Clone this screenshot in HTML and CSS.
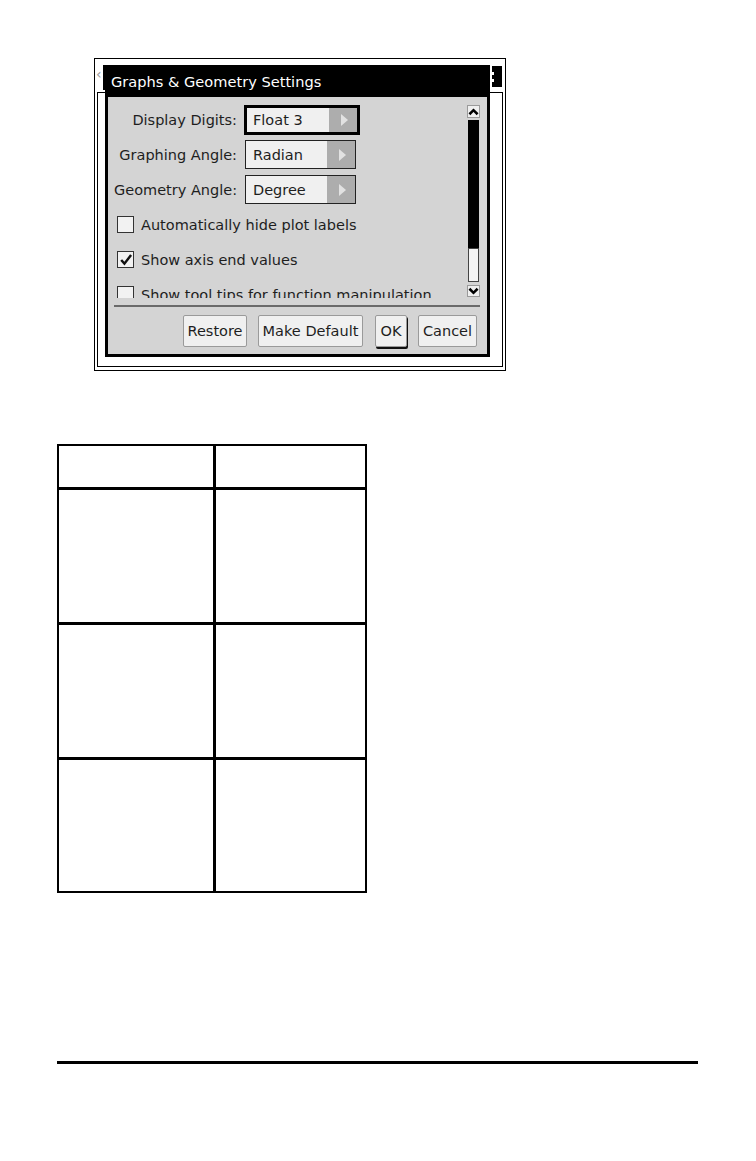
FILE: index.html
```html
<!DOCTYPE html>
<html>
<head>
<meta charset="utf-8">
<link rel="stylesheet" href="styles.css">
</head>
<body>
<div class="page">
  <div class="frame">
    <span class="bg-back">&lsaquo;</span>
    <div class="bg-bar"></div>
    <div class="bg-battery"><span class="notch n1"></span><span class="notch n2"></span></div>
    <div class="bg-win"></div>

    <div class="dialog">
      <div class="dlg-title">Graphs &amp; Geometry Settings</div>
      <div class="dlg-body">
        <div class="content">
          <div class="settings">
            <div class="row">
              <span class="label">Display Digits:</span>
              <div class="dd focused"><span class="dd-val">Float 3</span><span class="dd-btn"><span class="tri"></span></span></div>
            </div>
            <div class="row">
              <span class="label">Graphing Angle:</span>
              <div class="dd"><span class="dd-val">Radian</span><span class="dd-btn"><span class="tri"></span></span></div>
            </div>
            <div class="row">
              <span class="label">Geometry Angle:</span>
              <div class="dd"><span class="dd-val">Degree</span><span class="dd-btn"><span class="tri"></span></span></div>
            </div>
            <div class="row check-row">
              <span class="cb"></span><span class="cb-text">Automatically hide plot labels</span>
            </div>
            <div class="row check-row">
              <span class="cb"><svg class="tick" viewBox="0 0 16 16" width="14" height="14"><path d="M2.5 8 L6.2 12.2 L13.8 2.2" fill="none" stroke="#111" stroke-width="2.8"/></svg></span><span class="cb-text">Show axis end values</span>
            </div>
            <div class="row check-row">
              <span class="cb"></span><span class="cb-text">Show tool tips for function manipulation</span>
            </div>
          </div>
          <div class="scrollbar">
            <div class="sb-arrow"><svg viewBox="0 0 12 11" width="11" height="10"><path d="M1.5 8 L6 3.5 L10.5 8" fill="none" stroke="#000" stroke-width="2.8"/></svg></div>
            <div class="sb-track"></div>
            <div class="sb-thumb"></div>
            <div class="sb-arrow down"><svg viewBox="0 0 12 11" width="11" height="10"><path d="M1.5 3 L6 7.5 L10.5 3" fill="none" stroke="#000" stroke-width="2.8"/></svg></div>
          </div>
        </div>
        <div class="separator"></div>
        <div class="buttons">
          <span class="btn b-restore">Restore</span>
          <span class="btn b-default">Make Default</span>
          <span class="btn b-ok">OK</span>
          <span class="btn b-cancel">Cancel</span>
        </div>
      </div>
    </div>
  </div>

  <div class="grid-table">
    <div class="cell"></div><div class="cell"></div>
    <div class="cell"></div><div class="cell"></div>
    <div class="cell"></div><div class="cell"></div>
    <div class="cell"></div><div class="cell"></div>
  </div>

  <div class="rule"></div>
</div>
</body>
</html>
```
FILE: styles.css
```css
html, body {
  margin: 0;
  padding: 0;
  background: #fff;
}
.page {
  width: 756px;
  height: 1161px;
  padding-top: 58px;
  box-sizing: border-box;
  font-family: "DejaVu Sans", sans-serif;
  color: #1e1e1e;
}

/* screenshot frame */
.frame {
  position: relative;
  margin-left: 94px;
  width: 412px;
  height: 313px;
  box-sizing: border-box;
  border: 1px solid #000;
  background: #fff;
}
.bg-back {
  position: absolute;
  left: 1px;
  top: 5px;
  font-size: 14px;
  color: #999;
  line-height: 20px;
}
.bg-bar {
  position: absolute;
  left: 8px;
  top: 6px;
  width: 387px;
  height: 25px;
  background: #000;
}
.bg-battery {
  position: absolute;
  left: 397px;
  top: 7px;
  width: 10px;
  height: 21px;
  background: #000;
}
.notch {
  position: absolute;
  background: #fff;
  width: 2px;
  height: 3px;
}
.n1 { left: 0; top: 6px; }
.n2 { left: 0; top: 13px; }
.bg-win {
  position: absolute;
  left: 2px;
  top: 33px;
  width: 406px;
  height: 275px;
  box-sizing: border-box;
  border: 1px solid #000;
}

/* dialog */
.dialog {
  position: absolute;
  left: 10px;
  top: 8px;
  width: 385px;
  height: 290px;
  display: flex;
  flex-direction: column;
}
.dlg-title {
  height: 30px;
  background: #000;
  color: #fff;
  font-size: 14.6px;
  line-height: 30px;
  padding-left: 6px;
  white-space: nowrap;
}
.dlg-body {
  flex: 1;
  background: #d4d4d4;
  border: 3px solid #000;
  border-top: none;
  padding: 3px 7px 7px 6px;
  display: flex;
  flex-direction: column;
}
.content {
  display: flex;
  height: 198px;
}
.settings {
  flex: 1;
  overflow: hidden;
  padding-top: 2px;
}
.row {
  height: 35px;
  display: flex;
  align-items: center;
  font-size: 14.5px;
  white-space: nowrap;
}
.label {
  width: 123px;
  text-align: right;
  margin-right: 7px;
  flex: none;
}
.dd {
  display: flex;
  box-sizing: border-box;
  width: 111px;
  height: 29px;
  border: 1px solid #222;
  margin-left: 1px;
}
.dd.focused {
  width: 116px;
  height: 30px;
  border: 3px solid #000;
  margin-left: 0;
}
.dd-val {
  flex: 1;
  background: #f0f0f0;
  padding-left: 7px;
  line-height: 28px;
}
.dd.focused .dd-val {
  padding-left: 6px;
  line-height: 25px;
}
.dd-btn {
  width: 28px;
  background: #adadad;
  display: flex;
  align-items: center;
  padding-left: 12px;
  box-sizing: border-box;
}
.tri {
  width: 0;
  height: 0;
  border-top: 6px solid transparent;
  border-bottom: 6px solid transparent;
  border-left: 7px solid #e2e2e2;
}
.check-row {
  padding-left: 3px;
}
.cb {
  width: 17px;
  height: 17px;
  box-sizing: border-box;
  border: 1px solid #333;
  background: #f2f2f2;
  margin-right: 7px;
  flex: none;
  display: flex;
  align-items: center;
  justify-content: center;
}

/* scrollbar */
.scrollbar {
  width: 13px;
  margin-left: 2px;
  padding-top: 5px;
  display: flex;
  flex-direction: column;
  align-items: center;
}
.sb-arrow {
  width: 13px;
  height: 13px;
  box-sizing: border-box;
  border: 1px solid #9a9a9a;
  background: #efefef;
  display: flex;
  align-items: center;
  justify-content: center;
}
.sb-arrow.down {
  margin-top: 3px;
  height: 12px;
}
.sb-track {
  margin-top: 2px;
  width: 11px;
  height: 128px;
  background: #000;
}
.sb-thumb {
  width: 11px;
  height: 34px;
  box-sizing: border-box;
  border: 1px solid #444;
  background: #f4f4f4;
}

.separator {
  margin-top: 7px;
  height: 2px;
  background: #6a6a6a;
}
.buttons {
  margin-top: 8px;
  display: flex;
  justify-content: flex-end;
  gap: 11px;
  padding-right: 3px;
}
.btn {
  height: 32px;
  box-sizing: border-box;
  border: 1px solid #9a9a9a;
  border-radius: 2px;
  background: #f0f0f0;
  font-size: 14.5px;
  line-height: 30px;
  text-align: center;
  white-space: nowrap;
  overflow: hidden;
}
.b-restore { width: 64px; }
.b-default { width: 105px; }
.b-ok { width: 32px; margin-left: 1px; box-shadow: 1px 2px 0 #111; }
.b-cancel { width: 59px; }

/* table */
.grid-table {
  margin-top: 73px;
  margin-left: 57px;
  width: 310px;
  display: grid;
  grid-template-columns: 154px 149px;
  grid-template-rows: 41px 132px 132px 131px;
  gap: 3px;
  padding: 2px;
  box-sizing: border-box;
  background: #000;
}
.cell {
  background: #fff;
}

.rule {
  margin-top: 168px;
  margin-left: 57px;
  width: 641px;
  height: 3px;
  background: #000;
}
```
